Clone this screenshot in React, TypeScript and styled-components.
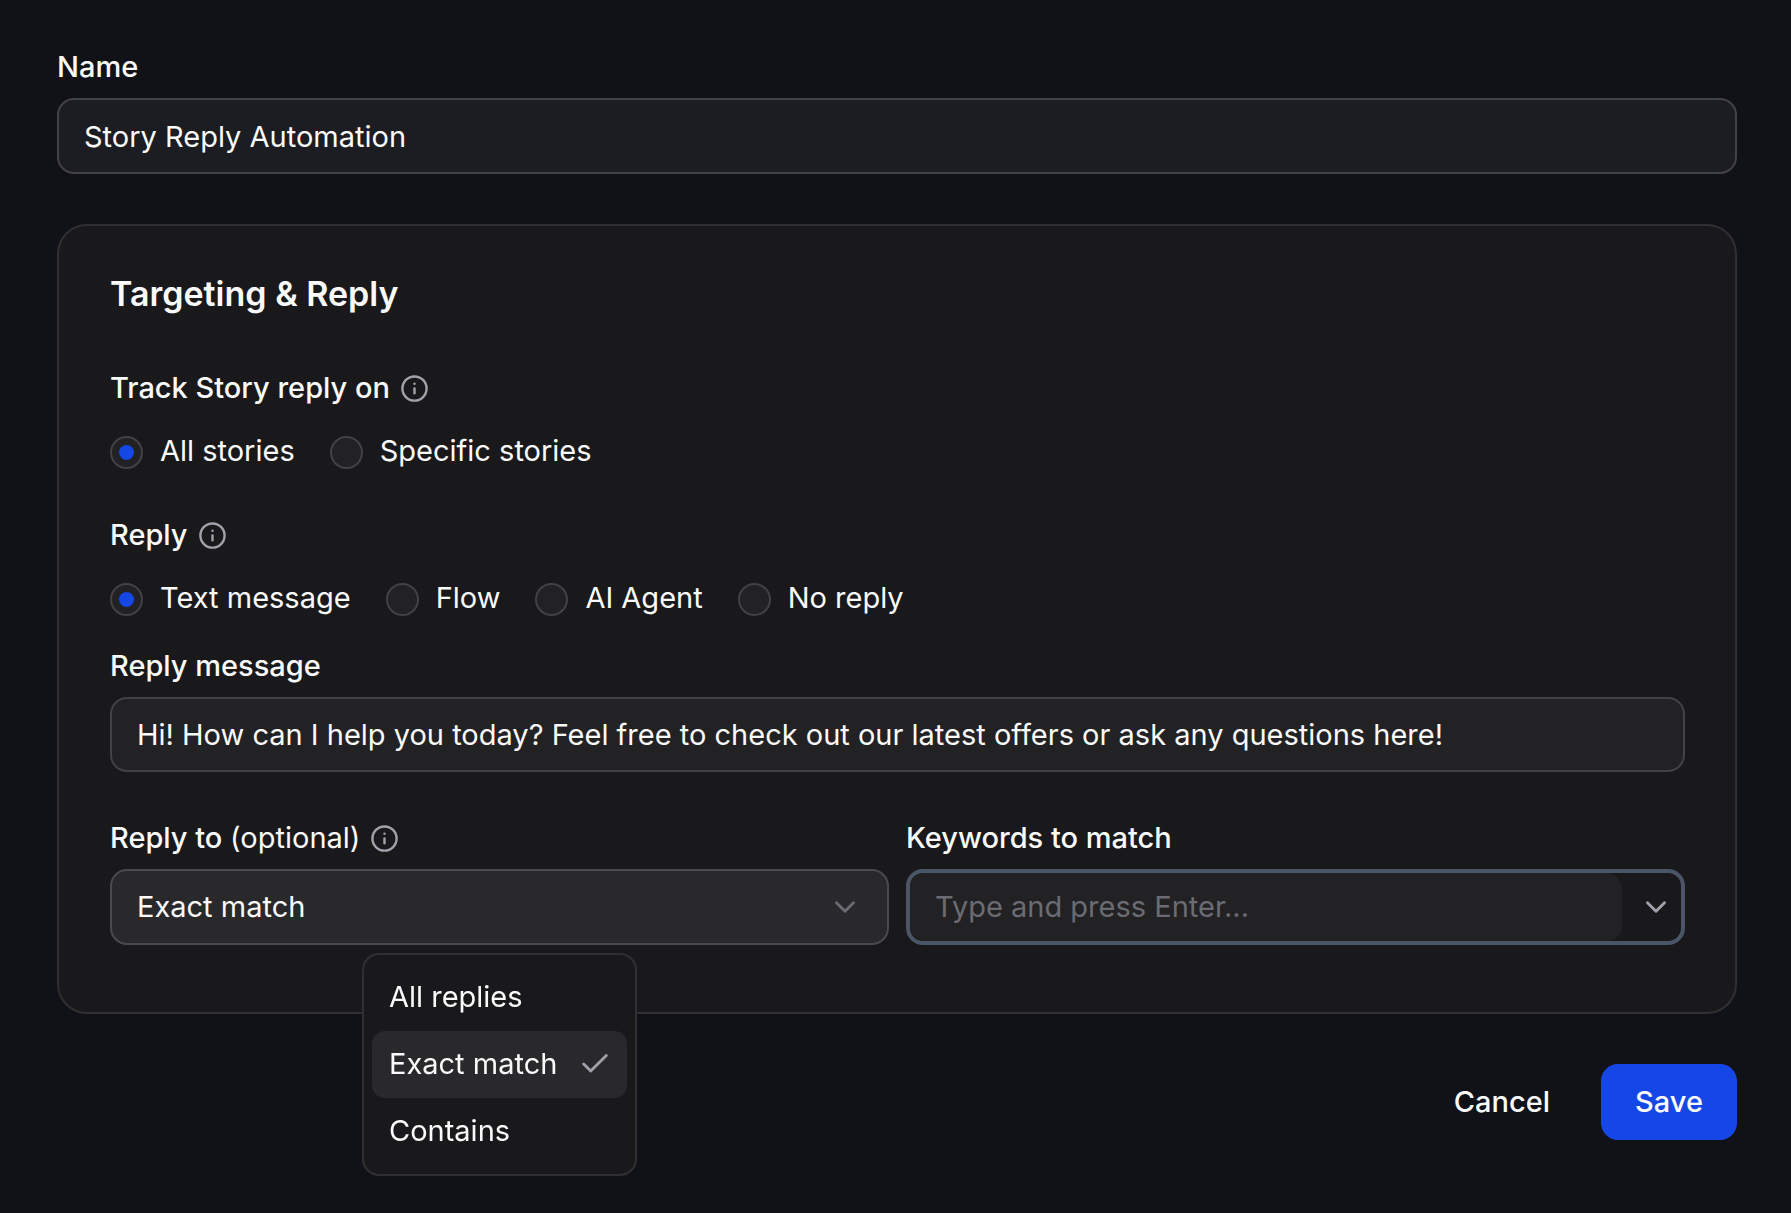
import React, { useState } from "react";
import styled, { createGlobalStyle } from "styled-components";
import { Check, ChevronDown, Info } from "lucide-react";

const GlobalStyle = createGlobalStyle`
  *, *::before, *::after { box-sizing: border-box; }
  body {
    margin: 0;
    background: #111217;
    color: #fafafa;
    font-family: Inter, "Liberation Sans", sans-serif;
    font-size: 29px;
    line-height: 42px;
    font-optical-sizing: none;
  }
  button, input, select { font: inherit; color: inherit; margin: 0; font-optical-sizing: none; }
`;

const Form = styled.form`
  display: flex;
  flex-direction: column;
  gap: 50px;
  padding: 46px 54px 72px 57px;
`;

const Field = styled.div`
  display: flex;
  flex-direction: column;
  gap: 10px;
  min-width: 0;
`;

const LabelRow = styled.div`
  display: flex;
  align-items: center;
  gap: 10px;
`;

const Label = styled.label`
  font-weight: 500;
`;

const Optional = styled.span`
  font-weight: 400;
`;

const InfoIcon = styled(Info)`
  color: #a1a1aa;
  flex: none;
`;

const TextInput = styled.input<{ $surface: string; $height: number }>`
  width: 100%;
  height: ${(p) => p.$height}px;
  padding: 0 25px;
  border: 2px solid #424246;
  border-radius: 17px;
  background: ${(p) => p.$surface};
  outline: none;
`;

const Card = styled.section`
  display: flex;
  flex-direction: column;
  padding: 50px 50px 67px 51px;
  border: 2px solid #303032;
  border-radius: 30px;
  background: #19191b;
`;

const Title = styled.h2`
  margin: 0 0 55px;
  font-size: 34px;
  line-height: 36px;
  font-weight: 600;
`;

const RadioGroup = styled.fieldset<{ $after: number }>`
  display: flex;
  flex-direction: column;
  gap: 21px;
  min-width: 0;
  margin: 0 0 ${(p) => p.$after}px;
  padding: 0;
  border: 0;
`;

const Legend = styled.span`
  font-weight: 500;
`;

const Options = styled.div`
  display: flex;
  flex-wrap: wrap;
  gap: 35px;
`;

const RadioLabel = styled.label`
  display: flex;
  align-items: flex-start;
  gap: 17px;
`;

const Radio = styled.input`
  appearance: none;
  display: grid;
  place-items: center;
  flex: none;
  width: 33px;
  height: 33px;
  margin-top: 6px;
  border: 2px solid #424246;
  border-radius: 50%;
  background: #222224;

  &:checked::before {
    content: "";
    width: 15px;
    height: 15px;
    border-radius: 50%;
    background: #1447e6;
  }
`;

const Columns = styled.div`
  display: grid;
  grid-template-columns: 1fr 1fr;
  gap: 17px;
  margin-top: 45px;
`;

const Control = styled.div`
  position: relative;
  display: grid;
`;

const Select = styled.select`
  appearance: none;
  width: 100%;
  height: 76px;
  padding: 0 76px 0 25px;
  border: 2px solid #4a4a4d;
  border-radius: 17px;
  background: #29292b;
  outline: none;
`;

const SelectArrow = styled(ChevronDown)`
  position: absolute;
  top: 21px;
  right: 27px;
  color: #6b6b73;
  pointer-events: none;
`;

const Menu = styled.div`
  position: absolute;
  top: 84px;
  left: 252px;
  z-index: 1;
  display: flex;
  flex-direction: column;
  width: 275px;
  padding: 9px 8px;
  border: 2px solid #303032;
  border-radius: 17px;
  background: #19191b;
  will-change: transform;
`;

const MenuItem = styled.button<{ $active: boolean }>`
  display: flex;
  align-items: center;
  justify-content: space-between;
  height: 67px;
  padding: 0 15px 1px 17px;
  border: 0;
  border-radius: 13px;
  background: ${(p) => (p.$active ? "#29292b" : "transparent")};
  text-align: left;

  svg { color: #a1a1aa; }
`;

const Combo = styled.div`
  display: flex;
  height: 76px;
  border: 4px solid #4a5568;
  border-radius: 17px;
`;

const ComboInput = styled.input`
  flex: 1;
  min-width: 0;
  padding: 0 25px;
  border: 0;
  border-radius: 15px;
  background: #222224;
  outline: none;

  &::placeholder { color: #6b6b73; opacity: 1; }
`;

const ComboButton = styled.button`
  display: grid;
  place-items: center;
  width: 59px;
  padding: 0 0 0 8px;
  border: 0;
  background: none;
  color: #a1a1aa;
`;

const Footer = styled.footer`
  display: flex;
  justify-content: flex-end;
  gap: 17px;
`;

const Button = styled.button<{ $primary?: boolean }>`
  height: 76px;
  padding: 0 34px;
  border: 0;
  border-radius: 17px;
  background: ${(p) => (p.$primary ? "#1447e6" : "transparent")};
  font-weight: 500;
`;

const MATCH_MODES = ["All replies", "Exact match", "Contains"];

function InfoMark() {
  return <InfoIcon size={29} strokeWidth={2} aria-hidden />;
}

interface RadiosProps {
  legend: string;
  name: string;
  options: string[];
  after: number;
}

function Radios({ legend, name, options, after }: RadiosProps) {
  return (
    <RadioGroup $after={after} aria-labelledby={`${name}-legend`}>
      <LabelRow>
        <Legend id={`${name}-legend`}>{legend}</Legend>
        <InfoMark />
      </LabelRow>
      <Options>
        {options.map((option, i) => (
          <RadioLabel key={option}>
            <Radio type="radio" name={name} value={option} defaultChecked={i === 0} />
            {option}
          </RadioLabel>
        ))}
      </Options>
    </RadioGroup>
  );
}

export default function App() {
  const [mode, setMode] = useState("Exact match");

  return (
    <>
      <GlobalStyle />
      <Form onSubmit={(e) => e.preventDefault()}>
        <Field>
          <Label htmlFor="name">Name</Label>
          <TextInput id="name" $surface="#1c1d22" $height={76} defaultValue="Story Reply Automation" />
        </Field>

        <Card>
          <Title>Targeting &amp; Reply</Title>
          <Radios
            legend="Track Story reply on"
            name="track"
            options={["All stories", "Specific stories"]}
            after={42}
          />
          <Radios
            legend="Reply"
            name="reply"
            options={["Text message", "Flow", "AI Agent", "No reply"]}
            after={26}
          />
          <Field>
            <Label htmlFor="message">Reply message</Label>
            <TextInput
              id="message"
              $surface="#222224"
              $height={75}
              defaultValue="Hi! How can I help you today? Feel free to check out our latest offers or ask any questions here!"
            />
          </Field>

          <Columns>
            <Field>
              <LabelRow>
                <Label htmlFor="mode">
                  Reply to <Optional>(optional)</Optional>
                </Label>
                <InfoMark />
              </LabelRow>
              <Control>
                <Select id="mode" value={mode} onChange={(e) => setMode(e.target.value)}>
                  {MATCH_MODES.map((m) => (
                    <option key={m}>{m}</option>
                  ))}
                </Select>
                <SelectArrow size={34} strokeWidth={2} aria-hidden />
                <Menu role="listbox" aria-label="Reply to">
                  {MATCH_MODES.map((m) => (
                    <MenuItem
                      key={m}
                      type="button"
                      role="option"
                      aria-selected={m === mode}
                      $active={m === mode}
                      onClick={() => setMode(m)}
                    >
                      {m}
                      {m === mode && <Check size={34} strokeWidth={2} aria-hidden />}
                    </MenuItem>
                  ))}
                </Menu>
              </Control>
            </Field>
            <Field>
              <Label htmlFor="keywords">Keywords to match</Label>
              <Combo>
                <ComboInput id="keywords" placeholder="Type and press Enter..." />
                <ComboButton type="button" aria-label="Show keywords">
                  <ChevronDown size={34} strokeWidth={2} aria-hidden />
                </ComboButton>
              </Combo>
            </Field>
          </Columns>
        </Card>

        <Footer>
          <Button type="button">Cancel</Button>
          <Button type="submit" $primary>
            Save
          </Button>
        </Footer>
      </Form>
    </>
  );
}
